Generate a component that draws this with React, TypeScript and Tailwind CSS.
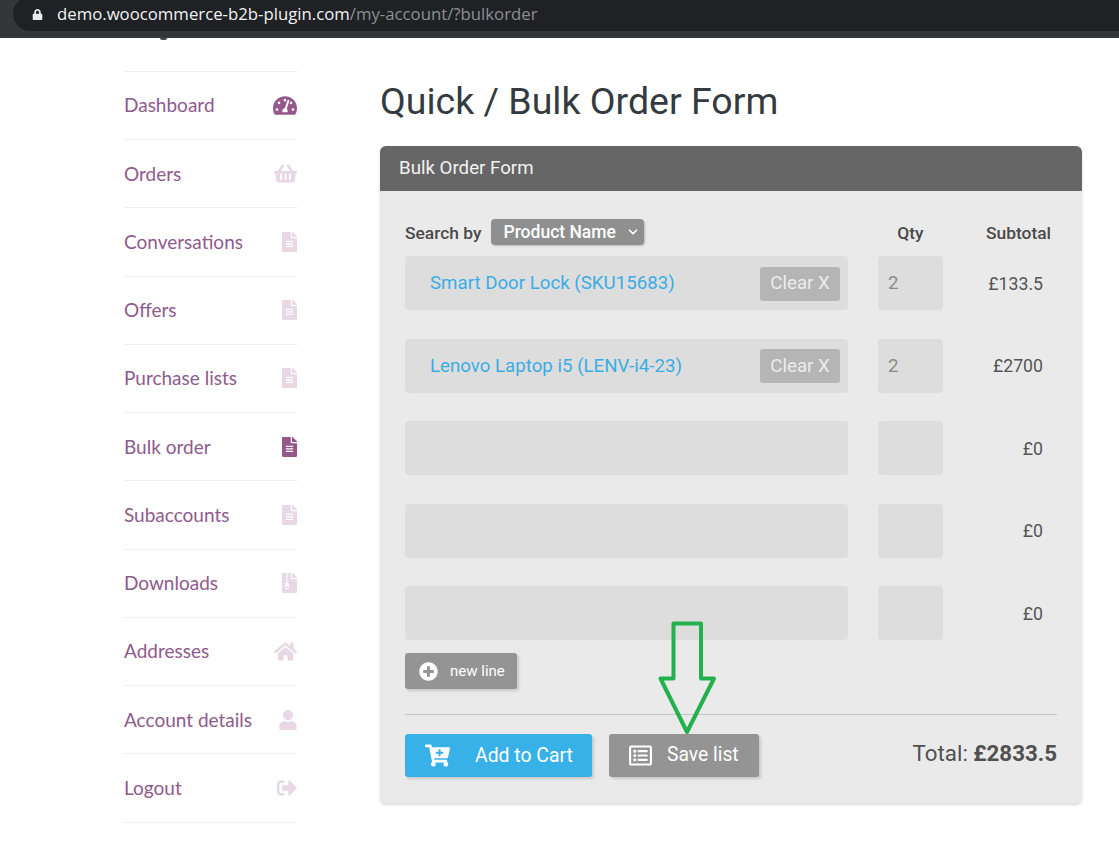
import React from 'react';
import {
  FaCartPlus,
  FaFileAlt,
  FaFileArchive,
  FaHome,
  FaLock,
  FaPlusCircle,
  FaRegListAlt,
  FaShoppingBasket,
  FaSignOutAlt,
  FaTachometerAlt,
  FaUser,
} from 'react-icons/fa';
import { ChevronDown } from 'lucide-react';

const menu = [
  { label: 'Dashboard', Icon: FaTachometerAlt, size: 'h-[23px] w-[24px]', on: true },
  { label: 'Orders', Icon: FaShoppingBasket, size: 'h-[23px] w-[23px]' },
  { label: 'Conversations', Icon: FaFileAlt, size: 'h-[20px] w-[15px]' },
  { label: 'Offers', Icon: FaFileAlt, size: 'h-[20px] w-[15px]' },
  { label: 'Purchase lists', Icon: FaFileAlt, size: 'h-[20px] w-[15px]' },
  { label: 'Bulk order', Icon: FaFileAlt, size: 'h-[20px] w-[15px]', on: true },
  { label: 'Subaccounts', Icon: FaFileAlt, size: 'h-[20px] w-[15px]' },
  { label: 'Downloads', Icon: FaFileArchive, size: 'h-[20px] w-[15px]' },
  { label: 'Addresses', Icon: FaHome, size: 'h-[23px] w-[23px]' },
  { label: 'Account details', Icon: FaUser, size: 'h-[20px] w-[18px]' },
  { label: 'Logout', Icon: FaSignOutAlt, size: 'h-[20px] w-[20px]' },
];

const rows = [
  { name: 'Smart Door Lock (SKU15683)', qty: '2', subtotal: '£133.5' },
  { name: 'Lenovo Laptop i5 (LENV-i4-23)', qty: '2', subtotal: '£2700' },
  { name: '', qty: '', subtotal: '£0' },
  { name: '', qty: '', subtotal: '£0' },
  { name: '', qty: '', subtotal: '£0' },
];

const App: React.FC = () => {
  return (
    <div className="relative h-[843px] w-[1119px] overflow-hidden bg-white font-['Roboto',sans-serif]">
      {/* browser address bar */}
      <div className="h-[38px] overflow-hidden bg-[#35363a] pl-[13px]">
        <div className="mt-[-3px] flex h-[34px] w-[1150px] items-center rounded-[17px] bg-[#202124] pl-[19px] font-['Open_Sans',sans-serif]">
          <FaLock size={11} className="text-[#e8eaed]" />
          <span className="ml-[14px] text-[16.75px] text-[#f1f3f4]">
            demo.woocommerce-b2b-plugin.com
            <span className="text-[#8b8f94]">/my-account/?bulkorder</span>
          </span>
        </div>
      </div>

      <div className="flex pl-[124px]">
        <aside className="w-[173px] shrink-0 font-['Lato',sans-serif]">
          <div className="h-[33px]">
            {/* tail of the page heading that scrolled under the address bar */}
            <div className="ml-[36px] h-[2px] w-[7px] rounded-b-[2px] bg-[#4a4a4a]" />
          </div>
          <nav className="mt-[-0.27px] border-t border-[#eeeeee]">
            {menu.map(({ label, Icon, size, on }) => (
              <div
                key={label}
                className="flex h-[68.27px] items-center justify-between border-b border-[#eeeeee] text-[19px] text-[#8f5a8c]"
              >
                <span className="pt-[0.5px]">{label}</span>
                <Icon className={`${size} ${on ? 'text-[#96588a]' : 'text-[#e8d8e5]'}`} />
              </div>
            ))}
          </nav>
        </aside>

        <main className="ml-[83px] w-[702px]">
          <h1 className="mt-[39px] h-[69px] text-[37.5px] leading-[48px] text-[#333a40]">Quick / Bulk Order Form</h1>
          <section className="h-[657px] rounded-[6px] bg-[#eaeaea] shadow-[0_2px_3px_rgba(0,0,0,0.15)]">
            <div className="flex h-[45px] items-center rounded-t-[6px] bg-[#666666] pb-[1px] pl-[19px] text-[18.7px] text-[#f2f2f2]">
              Bulk Order Form
            </div>
            <div className="px-[25px]">
              <div className="flex h-[65px] items-end pb-[10px] text-[17.4px] font-medium text-[#4a4a4a]">
                <div className="flex w-[473px] items-center">
                  <span className="pt-[2px]">Search by</span>
                  <span className="ml-[10px] flex h-[26px] w-[153px] items-center rounded-[4px] bg-[#8f8f8f] pl-[12px] text-[17.5px] text-white shadow-[1px_1px_2px_rgba(0,0,0,0.2)]">
                    Product Name
                    <ChevronDown size={14} strokeWidth={3} className="ml-[10px]" />
                  </span>
                </div>
                <span className="w-[65px] text-center">Qty</span>
                <span className="flex-1 pl-[43px]">Subtotal</span>
              </div>

              {rows.map((row, i) => (
                <div key={i} className="flex h-[82.5px] items-start text-[18.7px]">
                  <div className="flex h-[54px] w-[443px] items-center justify-between rounded-[4px] bg-[#dddddd] pt-[1px] pr-[8px] pl-[25px]">
                    <span className="text-[#3bade5]">{row.name}</span>
                    {row.name && (
                      <span className="flex h-[34px] w-[80px] items-center justify-center rounded-[3px] bg-[#b5b5b5] text-[#ececec]">
                        Clear X
                      </span>
                    )}
                  </div>
                  <div className="ml-[30px] flex h-[54px] w-[65px] items-center rounded-[4px] bg-[#dddddd] pt-[1px] pl-[10px] text-[#8a8a8a]">
                    {row.qty}
                  </div>
                  <div className="flex h-[54px] w-[100px] items-center justify-end pt-[2px] text-[17.7px] text-[#555]">
                    {row.subtotal}
                  </div>
                </div>
              ))}

              <button className="mt-[-15.5px] flex h-[36px] w-[112px] items-center rounded-[3px] bg-[#949494] pl-[14px] text-[15px] text-white shadow-[2px_2px_3px_rgba(0,0,0,0.15)]">
                <FaPlusCircle size={19} />
                <span className="ml-[12px]">new line</span>
              </button>

              <div className="mt-[25px] flex items-center border-t border-[#c4c4c4] pt-[19px]">
                <button className="flex h-[43px] w-[187px] items-center rounded-[3px] bg-[#38b0e8] pl-[20px] text-[19.4px] text-white shadow-[2px_2px_3px_rgba(0,0,0,0.15)]">
                  <FaCartPlus size={25} />
                  <span className="ml-[25px]">Add to Cart</span>
                </button>
                <button className="ml-[17px] flex h-[43px] w-[150px] items-center rounded-[3px] bg-[#949494] pl-[20px] text-[19.3px] text-white shadow-[2px_2px_3px_rgba(0,0,0,0.15)]">
                  <FaRegListAlt size={23} />
                  <span className="ml-[15px]">Save list</span>
                </button>
                <span className="mb-[4px] ml-auto text-[22.3px] text-[#505050]">
                  Total: <strong className="font-bold">£2833.5</strong>
                </span>
              </div>
            </div>
          </section>
        </main>
      </div>

      {/* annotation arrow drawn on top of the screenshot */}
      <svg className="absolute top-[620px] left-[656px]" width="64" height="118" viewBox="0 0 64 118">
        <path
          d="M17.5 3.5 H45 V58.5 H58 L31 112 L4.5 58.5 H17.5 Z"
          fill="none"
          stroke="#22b14c"
          strokeWidth="4"
          strokeLinejoin="round"
        />
      </svg>
    </div>
  );
};

export default App;
